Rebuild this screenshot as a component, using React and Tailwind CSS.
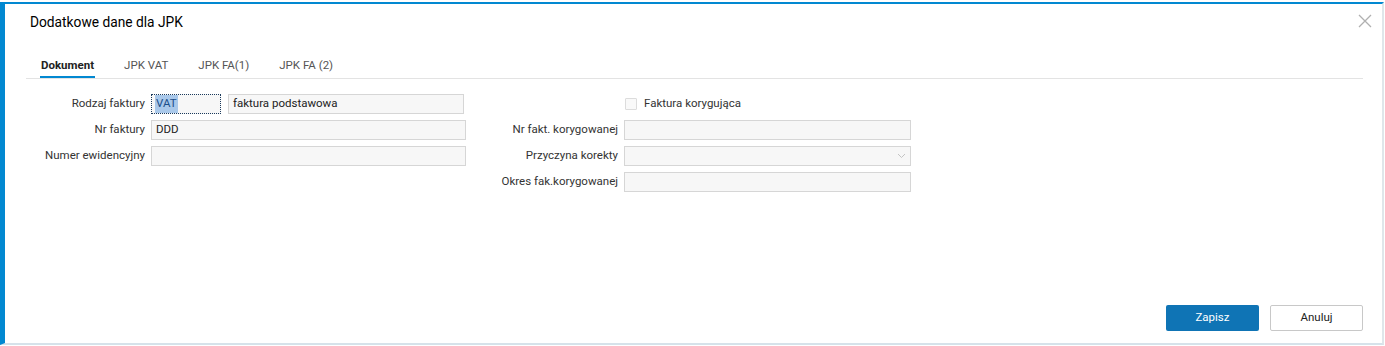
import { useState } from "react";

const tabs = ["Dokument", "JPK VAT", "JPK FA(1)", "JPK FA (2)"];

function Field({ label, labelWidth, children }) {
  return (
    <div className="flex items-center h-[20px]">
      <label
        className="text-right text-[11.5px] text-[#333] pr-[6px] shrink-0"
        style={{ width: labelWidth }}
      >
        {label}
      </label>
      {children}
    </div>
  );
}

function TextBox({ value = "", className = "" }) {
  return (
    <div
      className={`h-[20px] bg-[#f7f7f7] border border-[#d6d6d6] px-[4px] flex items-center text-[11.5px] text-[#222] ${className}`}
    >
      {value}
    </div>
  );
}

export default function App() {
  const [active, setActive] = useState(0);

  return (
    <div className="bg-white w-[1385px] h-[346px] pt-[2px] font-['Roboto',sans-serif]">
      <div className="w-[1384px] h-[343px] bg-white border-l-[5px] border-t-2 border-l-[#0288d1] border-t-[#0288d1] border-r-2 border-b-2 border-r-[#dfe6ea] border-b-[#d6e2ea] flex flex-col">
        {/* Header */}
        <div className="flex items-start justify-between pl-[25px] pr-[9px] pt-[8px]">
          <h1 className="text-[13.75px] leading-[20px] text-[#000]">
            Dodatkowe dane dla JPK
          </h1>
          <button className="mt-[1px] text-[#b0b0b0]">
            <svg width="16" height="16" viewBox="0 0 16 16" fill="none" stroke="currentColor" strokeWidth="1.3">
              <path d="M2 2 L14 14 M14 2 L2 14" />
            </svg>
          </button>
        </div>

        {/* Tabs */}
        <div className="ml-[21px] mr-[19px] mt-[25px] border-b border-[#e3e3e3] pl-[14px] flex gap-[28px]">
          {tabs.map((t, i) => (
            <button
              key={t}
              onClick={() => setActive(i)}
              className={`px-[1px] pb-[3px] text-[11.5px] leading-[16px] border-b-2 ${
                active === i
                  ? "border-[#0288d1] font-bold text-[#222]"
                  : "border-transparent text-[#555]"
              }`}
            >
              {t}
            </button>
          ))}
        </div>

        {/* Form */}
        <div className="flex mt-[15px]">
          <div className="flex flex-col gap-[6px]">
            <Field label="Rodzaj faktury" labelWidth="146px">
              <div className="h-[20px] w-[70px] border border-dotted border-[#1b3a5c] bg-[#f7f7f7] px-[3px] flex items-center text-[11.5px] text-[#1b4f8a]">
                <span className="bg-[#a9c8ea] px-[1px]">VAT</span>
              </div>
              <TextBox value="faktura podstawowa" className="w-[236px] ml-[7px]" />
            </Field>
            <Field label="Nr faktury" labelWidth="146px">
              <TextBox value="DDD" className="w-[315px]" />
            </Field>
            <Field label="Numer ewidencyjny" labelWidth="146px">
              <TextBox className="w-[315px]" />
            </Field>
          </div>

          <div className="flex flex-col gap-[6px]">
            <div className="flex items-center h-[20px] pl-[159px]">
              <span className="w-[12px] h-[12px] border border-[#dcdcdc] bg-[#f9f9f9] rounded-[1px]"></span>
              <span className="ml-[7px] text-[11.5px] text-[#333]">Faktura korygująca</span>
            </div>
            <Field label="Nr fakt. korygowanej" labelWidth="158px">
              <TextBox className="w-[287px]" />
            </Field>
            <Field label="Przyczyna korekty" labelWidth="158px">
              <div className="h-[20px] w-[287px] bg-[#f7f7f7] border border-[#d6d6d6] flex items-center justify-end pr-[4px]">
                <svg width="9" height="6" viewBox="0 0 9 6" fill="none" stroke="#c4c4c4" strokeWidth="1">
                  <path d="M1 1 L4.5 4.5 L8 1" />
                </svg>
              </div>
            </Field>
            <Field label="Okres fak.korygowanej" labelWidth="158px">
              <TextBox className="w-[287px]" />
            </Field>
          </div>
        </div>

        <div className="flex-1" />

        {/* Footer */}
        <div className="flex justify-end gap-[11px] pr-[19px] pb-[12px]">
          <button className="w-[93px] h-[26px] rounded-[2px] bg-[#0f74b5] text-white text-[11.5px]">
            Zapisz
          </button>
          <button className="w-[93px] h-[26px] rounded-[2px] border border-[#c8c8c8] bg-white text-[#222] text-[11.5px]">
            Anuluj
          </button>
        </div>
      </div>
    </div>
  );
}
